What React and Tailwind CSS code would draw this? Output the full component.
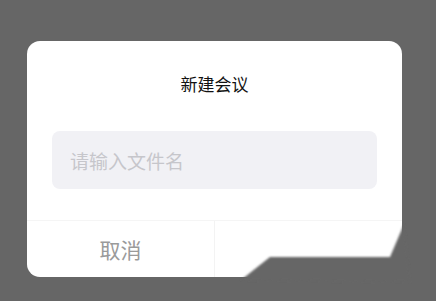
function App() {
  return (
    <div
      className="relative h-[301px] w-full overflow-hidden bg-[#666666] pt-[41px] pl-[27px]"
      style={{ fontFamily: '"Noto Sans CJK SC", "Noto Sans", sans-serif' }}
    >
      <div className="flex h-[236px] w-[375px] flex-col overflow-hidden rounded-[13px] bg-white">
        <div className="flex h-[90px] items-center justify-center pb-[4px] text-[17px] text-[#111111]">
          新建会议
        </div>
        <div className="px-[25px]">
          <input
            type="text"
            placeholder="请输入文件名"
            className="h-[58px] w-full rounded-[8px] bg-[#f1f1f5] px-[18px] text-[19px] text-[#333] outline-none placeholder:text-[#c6c6cb]"
          />
        </div>
        <div className="mt-[31px] flex flex-1 border-t border-[#f5f5f5]">
          <button
            type="button"
            className="flex flex-1 items-center justify-center border-r border-[#f3f3f3] pt-[2px] text-[21px] text-[#9a9a9a]"
          >
            取消
          </button>
          <button type="button" className="flex flex-1 items-center justify-center text-[21px] text-[#9a9a9a]" />
        </div>
      </div>
      <svg className="pointer-events-none absolute left-0 top-0" width="436" height="301" viewBox="0 0 436 301">
        <defs>
          <filter id="soft" x="-10%" y="-10%" width="120%" height="120%">
            <feGaussianBlur stdDeviation="0.8" />
          </filter>
        </defs>
        <polygon points="404,224 390,257 270,257 241,280 410,282" fill="#666666" filter="url(#soft)" />
      </svg>
    </div>
  )
}

export default App
